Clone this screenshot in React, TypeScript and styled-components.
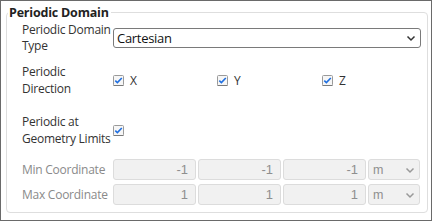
import React from "react";
import styled, { createGlobalStyle } from "styled-components";

const Global = createGlobalStyle`
  html, body { margin: 0; padding: 0; background: #ffffff; }
  body { font-family: "Open Sans", "Noto Sans", sans-serif; }
  * { box-sizing: border-box; }
`;

const Frame = styled.div`
  width: 432px;
  height: 221px;
  border: 1px solid #6a6a6a;
  padding: 3px 5px 0 5px;
  background: #fff;
`;

const Fieldset = styled.fieldset`
  margin: 0;
  width: 422px;
  height: 209px;
  border: 1px solid #dedede;
  border-radius: 4px;
  padding: 0 6px 0 15px;
`;

const Legend = styled.legend`
  padding: 0 2px 0 1px;
  margin-left: -14px;
  font-family: "Open Sans", sans-serif;
  font-weight: 700;
  font-size: 12.5px;
  color: #222;
  letter-spacing: -0.2px;
`;

const Row = styled.div<{ $top: number }>`
  display: grid;
  grid-template-columns: 91px 1fr;
  align-items: center;
  margin-top: ${(p) => p.$top}px;
`;

const Label = styled.div<{ $muted?: boolean; $lh?: number }>`
  font-size: 12px;
  line-height: ${(p) => p.$lh ?? 16}px;
  color: ${(p) => (p.$muted ? "#8a8a8a" : "#333")};
  letter-spacing: -0.25px;
`;

const SelectBox = styled.div`
  height: 20px;
  border: 1px solid #7a7a7a;
  border-radius: 3px;
  display: flex;
  align-items: center;
  justify-content: space-between;
  padding: 0 4px 0 3px;
  font-size: 13px;
  color: #111;
  letter-spacing: -0.3px;
`;

const Checks = styled.div`
  display: grid;
  grid-template-columns: 104px 105px 1fr;
`;

const CheckItem = styled.label`
  display: flex;
  align-items: center;
  gap: 6px;
  font-size: 12px;
  color: #333;
`;

const Coords = styled.div`
  display: grid;
  grid-template-columns: 83px 83px 83px 52px;
  gap: 2px;
`;

const Field = styled.div`
  height: 21px;
  background: #f1f1f1;
  border: 1px solid #dcdcdc;
  border-radius: 3px;
  display: flex;
  align-items: center;
  justify-content: flex-end;
  padding-right: 7px;
  font-family: "Liberation Sans", Arial, sans-serif;
  font-size: 13px;
  color: #8f8f8f;
`;

const Unit = styled(Field)`
  justify-content: space-between;
  padding: 0 4px 0 4px;
  font-size: 12.5px;
`;

const Chevron = ({ color = "#333" }: { color?: string }) => (
  <svg width="10" height="8" viewBox="0 0 10 8">
    <path d="M1.5 2.5 L5 6 L8.5 2.5" fill="none" stroke={color} strokeWidth="1.5" />
  </svg>
);

const CheckIcon = () => (
  <svg width="11" height="11" viewBox="0 0 11 11">
    <rect x="0.5" y="0.5" width="10" height="10" rx="1" fill="#f6f6f6" stroke="#9a9a9a" />
    <path d="M0.5 10.5 H10.5" stroke="#7a7a7a" />
    <path d="M2.3 5.6 L4.4 7.6 L8.8 3" fill="none" stroke="#1f6fe0" strokeWidth="1.6" />
  </svg>
);

export default function App() {
  return (
    <>
      <Global />
      <Frame>
        <Fieldset>
          <Legend>Periodic Domain</Legend>
          <Row $top={1}>
            <Label>
              Periodic Domain
              <br />
              Type
            </Label>
            <SelectBox>
              <span>Cartesian</span>
              <Chevron />
            </SelectBox>
          </Row>
          <Row $top={9}>
            <Label $lh={17}>
              Periodic
              <br />
              Direction
            </Label>
            <Checks>
              <CheckItem>
                <CheckIcon />X
              </CheckItem>
              <CheckItem>
                <CheckIcon />Y
              </CheckItem>
              <CheckItem>
                <CheckIcon />Z
              </CheckItem>
            </Checks>
          </Row>
          <Row $top={16}>
            <Label $lh={17}>
              Periodic at
              <br />
              Geometry Limits
            </Label>
            <Checks>
              <CheckItem>
                <CheckIcon />
              </CheckItem>
            </Checks>
          </Row>
          <Row $top={12}>
            <Label $muted>Min Coordinate</Label>
            <Coords>
              <Field>-1</Field>
              <Field>-1</Field>
              <Field>-1</Field>
              <Unit>
                <span>m</span>
                <Chevron color="#999" />
              </Unit>
            </Coords>
          </Row>
          <Row $top={4}>
            <Label $muted>Max Coordinate</Label>
            <Coords>
              <Field>1</Field>
              <Field>1</Field>
              <Field>1</Field>
              <Unit>
                <span>m</span>
                <Chevron color="#999" />
              </Unit>
            </Coords>
          </Row>
        </Fieldset>
      </Frame>
    </>
  );
}
